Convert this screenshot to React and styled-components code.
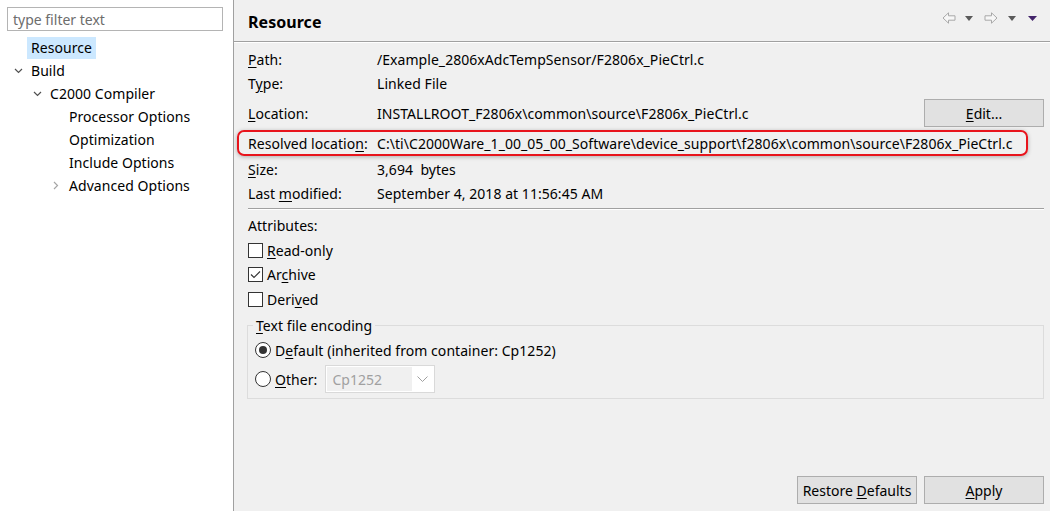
import React from "react";
import styled, { createGlobalStyle } from "styled-components";

const GlobalStyle = createGlobalStyle`
  html, body, #root {
    margin: 0;
    height: 100%;
  }
  body {
    font-family: "Noto Sans", "Open Sans", sans-serif;
    font-size: 14px;
    letter-spacing: 0.05px;
    color: #000;
    background: #f0f0f0;
  }
`;

const Window = styled.div`
  display: flex;
  width: 1050px;
  height: 511px;
  overflow: hidden;
`;

const Sidebar = styled.div`
  width: 226px;
  flex-shrink: 0;
  background: #fff;
  border-right: 1px solid #a0a0a0;
  padding: 7px 0 0 7px;
`;

const Filter = styled.input`
  box-sizing: border-box;
  width: 216px;
  height: 24px;
  border: 1px solid #b4b4b4;
  padding: 0 5px;
  font-family: inherit;
  font-size: 14px;
  outline: none;
  &::placeholder {
    color: #6d6d6d;
  }
`;

const Tree = styled.div`
  margin-top: 5px;
`;

const TreeRow = styled.div`
  display: flex;
  align-items: center;
  height: 23px;
  padding-left: ${(p) => p.$depth * 19}px;
`;

const Twisty = styled.span`
  display: flex;
  align-items: center;
  justify-content: center;
  width: 22px;
  margin-right: 2px;
`;

const TreeLabel = styled.span`
  display: flex;
  align-items: center;
  height: 22px;
  padding: 0 4px;
  margin-left: -4px;
  background: ${(p) => (p.$selected ? "#cce8ff" : "transparent")};
  white-space: nowrap;
`;

const Main = styled.div`
  flex: 1;
  display: flex;
  flex-direction: column;
  background: #f0f0f0;
`;

const TitleBar = styled.div`
  display: flex;
  justify-content: space-between;
  align-items: flex-start;
  height: 41px;
  padding: 0 13px 0 14px;
  border-bottom: 1px solid #a0a0a0;
  box-shadow: 0 1px 0 #fff;
`;

const Title = styled.h1`
  margin: 11px 0 0;
  font-size: 16px;
  line-height: 22px;
  font-weight: 700;
`;

const NavTools = styled.div`
  display: flex;
  align-items: center;
  height: 14px;
  margin-top: 11px;
`;

const NavIcon = styled.svg`
  display: block;
  margin-left: ${(p) => p.$gap || 0}px;
`;

const Body = styled.div`
  flex: 1;
  display: flex;
  flex-direction: column;
  padding: 5px 6px 7px 14px;
`;

const Prop = styled.div`
  display: flex;
  align-items: center;
  height: ${(p) => p.$h}px;
  white-space: nowrap;
`;

const Highlight = styled.div`
  box-sizing: border-box;
  display: flex;
  align-items: center;
  align-self: flex-start;
  height: 26px;
  margin-left: -11px;
  padding: 0 14px 0 9px;
  border: 2px solid #e8141c;
  border-radius: 7px;
  box-shadow: 0 1px 4px rgba(0, 0, 0, 0.28);
  white-space: nowrap;
`;

const Label = styled.span`
  width: 129px;
  flex-shrink: 0;
`;

const Button = styled.button`
  box-sizing: border-box;
  width: 120px;
  height: 28px;
  margin-left: ${(p) => (p.$push ? "auto" : "0")};
  background: #e1e1e1;
  border: 1px solid #adadad;
  font-family: inherit;
  font-size: 14px;
  color: #000;
  padding: 0;
`;

const Separator = styled.div`
  height: 1px;
  margin-top: 4px;
  background: #a0a0a0;
  box-shadow: 0 1px 0 #fff;
`;

const Caption = styled.div`
  display: flex;
  align-items: center;
  height: 24px;
  margin: 4px 0 1px;
`;

const CheckRow = styled.label`
  display: flex;
  align-items: center;
  gap: 4px;
  height: 24.5px;
`;

const Box = styled.span`
  box-sizing: border-box;
  display: flex;
  align-items: center;
  justify-content: center;
  width: 15px;
  height: 15px;
  border: 1px solid #333;
  background: #fff;
`;

const Group = styled.fieldset`
  margin: 4px 0 0 -1px;
  padding: 0 8px 4px 5px;
  border: 1px solid #dcdcdc;
  min-width: 0;
`;

const Legend = styled.legend`
  padding: 0 3px;
  line-height: 20px;
`;

const RadioRow = styled.label`
  display: flex;
  align-items: center;
  height: ${(p) => p.$h}px;
  padding-left: 2px;
`;

const Radio = styled.span`
  box-sizing: border-box;
  display: flex;
  align-items: center;
  justify-content: center;
  width: 16px;
  height: 16px;
  margin-right: 4px;
  border: 1px solid #333;
  border-radius: 50%;
  background: #fff;
  &::after {
    content: "";
    display: ${(p) => (p.$checked ? "block" : "none")};
    width: 8px;
    height: 8px;
    border-radius: 50%;
    background: #333;
  }
`;

const Combo = styled.div`
  box-sizing: border-box;
  display: flex;
  align-items: stretch;
  width: 110px;
  height: 28px;
  margin-left: 8px;
  padding: 1px;
  border: 1px solid #d9d9d9;
  background: #fff;
`;

const ComboText = styled.span`
  display: flex;
  align-items: center;
  width: 85px;
  padding-left: 5px;
  box-sizing: border-box;
  background: #f0f0f0;
  color: #a0a0a0;
`;

const ComboArrow = styled.span`
  flex: 1;
  display: flex;
  align-items: center;
  justify-content: center;
`;

const Footer = styled.div`
  margin-top: auto;
  display: flex;
  justify-content: flex-end;
  gap: 7px;
`;

const Key = styled.u`
  text-decoration: underline;
  text-underline-offset: 2px;
`;

const DownChevron = () => (
  <svg width="9" height="6" viewBox="0 0 9 6">
    <path d="M1 1 L4.5 4.5 L8 1" fill="none" stroke="#505050" strokeWidth="1.2" />
  </svg>
);

const RightChevron = () => (
  <svg width="6" height="9" viewBox="0 0 6 9">
    <path d="M1 1 L4.5 4.5 L1 8" fill="none" stroke="#a6a6a6" strokeWidth="1.2" />
  </svg>
);

const HollowArrow = ({ flip, gap }) => (
  <NavIcon $gap={gap} width="14" height="12" viewBox="0 0 14 12">
    <path
      d="M1 6 L6.5 0.8 V3.8 H13 V8.2 H6.5 V11.2 Z"
      fill="#f7f7f7"
      stroke="#a8a8a8"
      strokeWidth="1"
      strokeLinejoin="miter"
      transform={flip ? "translate(14 0) scale(-1 1)" : undefined}
    />
  </NavIcon>
);

const Drop = ({ gap, color = "#5a5a5a", w = 8 }) => (
  <NavIcon $gap={gap} width={w} height="5" viewBox={`0 0 ${w} 5`}>
    <path d={`M0 0 H${w} L${w / 2} 5 Z`} fill={color} />
  </NavIcon>
);

const tree = [
  { label: "Resource", depth: 0, selected: true },
  { label: "Build", depth: 0, twisty: "down" },
  { label: "C2000 Compiler", depth: 1, twisty: "down" },
  { label: "Processor Options", depth: 2 },
  { label: "Optimization", depth: 2 },
  { label: "Include Options", depth: 2 },
  { label: "Advanced Options", depth: 2, twisty: "right" },
];

export default function App() {
  return (
    <>
      <GlobalStyle />
      <Window>
        <Sidebar>
          <Filter placeholder="type filter text" />
          <Tree>
            {tree.map((t) => (
              <TreeRow key={t.label} $depth={t.depth}>
                <Twisty>
                  {t.twisty === "down" && <DownChevron />}
                  {t.twisty === "right" && <RightChevron />}
                </Twisty>
                <TreeLabel $selected={t.selected}>{t.label}</TreeLabel>
              </TreeRow>
            ))}
          </Tree>
        </Sidebar>

        <Main>
          <TitleBar>
            <Title>Resource</Title>
            <NavTools>
              <HollowArrow />
              <Drop gap={9} />
              <HollowArrow flip gap={11} />
              <Drop gap={10} />
              <Drop gap={12} w={9} color="#43246a" />
            </NavTools>
          </TitleBar>

          <Body>
            <Prop $h={24}>
              <Label><Key>P</Key>ath:</Label>
              /Example_2806xAdcTempSensor/F2806x_PieCtrl.c
            </Prop>
            <Prop $h={25}>
              <Label>T<Key>y</Key>pe:</Label>
              Linked File
            </Prop>
            <Prop $h={34}>
              <Label><Key>L</Key>ocation:</Label>
              INSTALLROOT_F2806x\common\source\F2806x_PieCtrl.c
              <Button $push><Key>E</Key>dit...</Button>
            </Prop>
            <Highlight>
              <Label>Resolved locatio<Key>n</Key>:</Label>
              C:\ti\C2000Ware_1_00_05_00_Software\device_support\f2806x\common\source\F2806x_PieCtrl.c
            </Highlight>
            <Prop $h={26}>
              <Label><Key>S</Key>ize:</Label>
              3,694&nbsp; bytes
            </Prop>
            <Prop $h={22}>
              <Label>Last <Key>m</Key>odified:</Label>
              September 4, 2018 at 11:56:45 AM
            </Prop>

            <Separator />

            <Caption>Attributes:</Caption>
            <CheckRow>
              <Box />
              <span><Key>R</Key>ead-only</span>
            </CheckRow>
            <CheckRow>
              <Box>
                <svg width="13" height="13" viewBox="0 0 13 13">
                  <path d="M2 6.5 L5 9.5 L11 3.5" fill="none" stroke="#333" strokeWidth="1.1" />
                </svg>
              </Box>
              <span>Ar<Key>c</Key>hive</span>
            </CheckRow>
            <CheckRow>
              <Box />
              <span>Deri<Key>v</Key>ed</span>
            </CheckRow>

            <Group>
              <Legend><Key>T</Key>ext file encoding</Legend>
              <RadioRow $h={29}>
                <Radio $checked />
                <span>D<Key>e</Key>fault (inherited from container: Cp1252)</span>
              </RadioRow>
              <RadioRow $h={29}>
                <Radio />
                <span><Key>O</Key>ther:</span>
                <Combo>
                  <ComboText>Cp1252</ComboText>
                  <ComboArrow>
                    <svg width="11" height="6" viewBox="0 0 11 6">
                      <path d="M0.5 0.5 L5.5 5.5 L10.5 0.5" fill="none" stroke="#a0a0a0" strokeWidth="1" />
                    </svg>
                  </ComboArrow>
                </Combo>
              </RadioRow>
            </Group>

            <Footer>
              <Button>Restore <Key>D</Key>efaults</Button>
              <Button><Key>A</Key>pply</Button>
            </Footer>
          </Body>
        </Main>
      </Window>
    </>
  );
}
